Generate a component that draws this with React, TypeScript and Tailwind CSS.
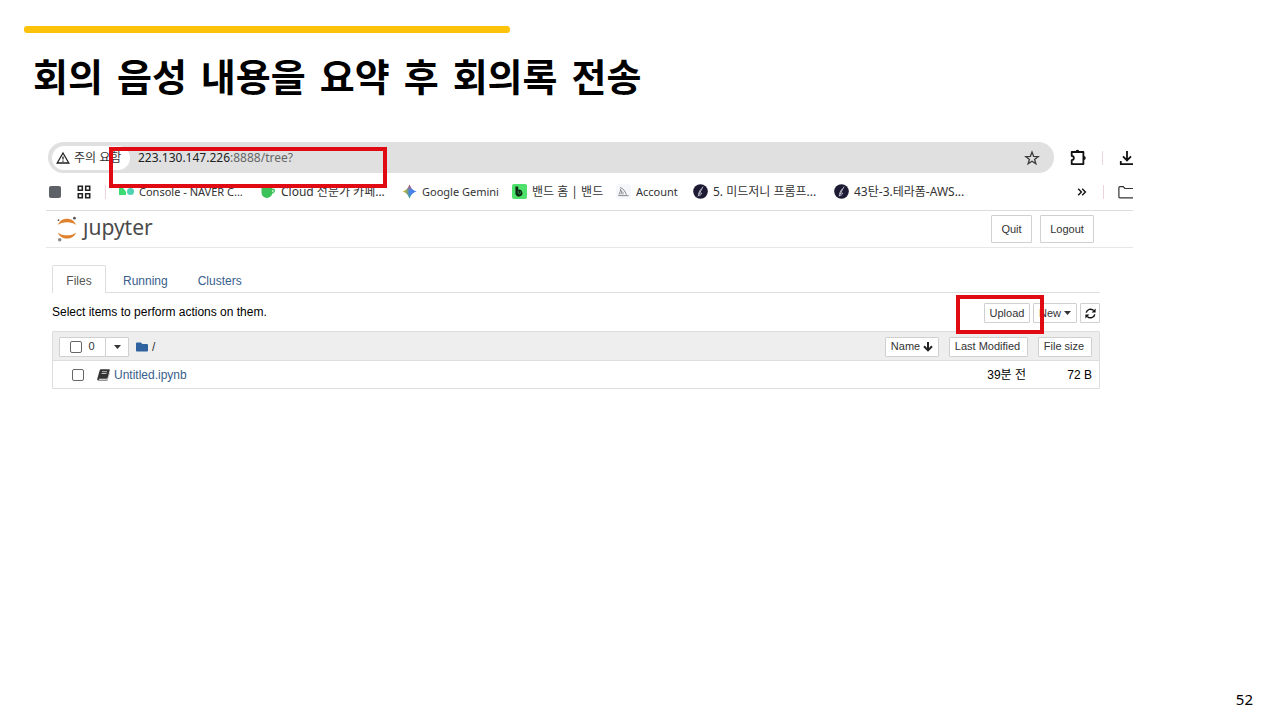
import type { ReactNode } from 'react';
import { FaFolder } from 'react-icons/fa';

const chromeFont = "font-['Noto_Sans','Noto_Sans_CJK_KR',sans-serif]";
const notebookFont = "font-['Liberation_Sans','Noto_Sans_CJK_KR',sans-serif]";

function WarningIcon() {
  return (
    <svg className="size-[14px]" viewBox="0 0 14 14" fill="none" stroke="#222" strokeWidth="1.3">
      <path d="M7 2 12.8 12H1.2Z" strokeLinejoin="miter" />
      <path d="M7 5.4v3.2M7 9.5v1.3" />
    </svg>
  );
}

function StarIcon() {
  return (
    <svg className="size-4" viewBox="0 0 16 16" fill="none" stroke="#3c3c3c" strokeWidth="1.3">
      <path d="M8 2 9.6 6.300l4.600.2-3.600 2.900 1.300 4.400L8 11.300l-3.900 2.500 1.300-4.400-3.600-2.900 4.600-.2Z" />
    </svg>
  );
}

function PuzzleIcon() {
  return (
    <svg className="size-[17px]" viewBox="0 0 16 16">
      <path
        d="M1.6 2.8H12.6V14.2H1.6v-3.700a2 2 0 0 0 0-4Z"
        fill="none"
        stroke="#111"
        strokeWidth="1.7"
        strokeLinejoin="round"
      />
      <path d="M5.2 2.6a1.8 1.8 0 0 1 3.6 0ZM13 6.700a1.800 1.800 0 0 1 0 3.600Z" fill="#111" />
    </svg>
  );
}

function DownloadIcon() {
  return (
    <svg className="h-4 w-[14px]" viewBox="0 0 14 16" fill="none" stroke="#111" strokeWidth="1.8">
      <path d="M8 1v9M4 6.4l4 4 4-4M1.8 11v3.2H14" />
    </svg>
  );
}

function AppsIcon() {
  return (
    <svg className="size-[14px]" viewBox="0 0 14 14" fill="none" stroke="#222" strokeWidth="1.6">
      <path d="M1.3 1.3h4v4h-4ZM8.7 1.3h4v4h-4ZM1.3 8.7h4v4h-4ZM8.7 8.7h4v4h-4Z" />
    </svg>
  );
}

function ConsoleIcon() {
  return (
    <svg className="size-[15px]" viewBox="0 0 15 15">
      <path d="M0 4h4l3 3.5V11H0Z" fill="#3ddb74" />
      <circle cx="11.5" cy="7.5" r="3.5" fill="#4fd2b4" />
    </svg>
  );
}

function CafeIcon() {
  return (
    <svg className="size-[15px]" viewBox="0 0 15 15">
      <path d="M.5 4h10.8v4.500a5.400 5.400 0 0 1-10.800 0Z" fill="#3cc25a" />
      <path d="M11 5.5h1.8c1 0 1 3.4-2.6 3.9" fill="none" stroke="#3cc25a" strokeWidth="1.3" />
    </svg>
  );
}

function GeminiIcon() {
  return (
    <svg className="size-[15px]" viewBox="0 0 15 15">
      <defs>
        <linearGradient id="gemX" x1="0" y1="0.5" x2="1" y2="0.5">
          <stop offset="0" stopColor="#f2bd2c" />
          <stop offset="0.3" stopColor="#8aa95c" />
          <stop offset="0.5" stopColor="#4a86e8" />
          <stop offset="1" stopColor="#3f7df0" />
        </linearGradient>
        <linearGradient id="gemY" x1="0.5" y1="0" x2="0.5" y2="1">
          <stop offset="0" stopColor="#e8453c" />
          <stop offset="0.4" stopColor="#e8453c" stopOpacity="0" />
          <stop offset="0.65" stopColor="#2fa866" stopOpacity="0" />
          <stop offset="1" stopColor="#2fa866" />
        </linearGradient>
      </defs>
      <path d="M7.500.5Q9.200 5.800 14.500 7.500 9.200 9.200 7.500 14.500 5.800 9.200.5 7.500 5.800 5.800 7.500.5Z" fill="url(#gemX)" />
      <path d="M7.500.5Q9.200 5.800 14.500 7.500 9.200 9.200 7.500 14.500 5.800 9.200.5 7.500 5.800 5.800 7.500.5Z" fill="url(#gemY)" />
    </svg>
  );
}

function BandIcon() {
  return (
    <svg className="size-[15px]" viewBox="0 0 15 15">
      <rect width="15" height="15" rx="2" fill="#4ee26c" />
      <path d="M3.400 2.500h2.800v3.200a3.500 3.500 0 1 1-2.300 5.200c-.5-.8-.5-1.600-.5-2.400Z" fill="#0b2a14" />
      <path d="M6.2 7.2c-.4 1.600.2 2.600 1.300 2.600s1.400-1 1-2.200" fill="none" stroke="#2f9a4b" strokeWidth="1" />
    </svg>
  );
}

function SailIcon() {
  return (
    <svg className="size-[15px]" viewBox="0 0 15 15" fill="none" stroke="#888" strokeWidth="1">
      <rect width="15" height="15" rx="3" fill="#f6f7fa" stroke="none" />
      <path d="M4 3.5c3 .8 5.3 3.500 6.300 7.200M3 10.400c1-2 1.600-3.400 1.700-5.400M4.800 10.400c.7-1.600 1-2.500.9-4M7 10.400c0-1 0-1.600-.2-2.600M2.300 11.600h10.200" />
    </svg>
  );
}

function QuillIcon() {
  return (
    <svg className="size-[15px]" viewBox="0 0 15 15">
      <circle cx="7.5" cy="7.500" r="7.300" fill="#1d1b33" />
      <path d="M10 2.600 5 12.300M8.600 4.600C7.200 5.800 6 8 5.400 10.400M6.400 9.800c1-.9 2.400-1.300 2.200-.2-.2.900-1.400 1.800-3.200 2" fill="none" stroke="#d8d8e4" strokeWidth=".8" />
    </svg>
  );
}

function MoreIcon() {
  return (
    <svg className="size-[10px]" viewBox="0 0 10 10" fill="none" stroke="#111" strokeWidth="1.400">
      <path d="M1.200 1.800 4.400 5 1.200 8.200M5.200 1.800 8.400 5 5.200 8.200" />
    </svg>
  );
}

function FolderOutlineIcon() {
  return (
    <svg className="h-[14px] w-[15px]" viewBox="0 0 15 14" fill="none" stroke="#333" strokeWidth="1.200">
      <path d="M15 12.900H1.800a.9.900 0 0 1-.9-.9V2.500c0-.5.400-.9.900-.9h3.400l1.600 1.900H15" />
    </svg>
  );
}

function JupyterLogo() {
  return (
    <svg className="h-[26px] w-5" viewBox="0 0 20 26">
      <path d="M1 9C3.500.8 16.500.8 19 9 15 5.200 5 5.200 1 9Z" fill="#e0812f" />
      <path d="M1 16.400C3.500 24.600 16.500 24.600 19 16.400 15 20.200 5 20.200 1 16.400Z" fill="#e0812f" />
      <circle cx="17.400" cy="2.200" r="1.400" fill="#555" />
      <circle cx="1.500" cy="4.200" r=".9" fill="#555" />
      <circle cx="2.700" cy="23.800" r="1.800" fill="#8a8a8a" />
    </svg>
  );
}

function CaretIcon() {
  return (
    <svg className="h-1 w-[7px]" viewBox="0 0 7 4" fill="currentColor">
      <path d="M0 0h7L3.500 4Z" />
    </svg>
  );
}

function ArrowDownIcon() {
  return (
    <svg className="size-[10px]" viewBox="0 0 10 10" fill="none" stroke="#222" strokeWidth="2">
      <path d="M5 0v8.300M1 4.300 5 8.400l4-4.100" />
    </svg>
  );
}

function RefreshIcon() {
  return (
    <svg className="size-[11px]" viewBox="0 0 11 11" fill="none" stroke="#111" strokeWidth="1.500">
      <path d="M1.200 4.700A4.400 4.400 0 0 1 8.700 2.600M9.800 6.300A4.400 4.400 0 0 1 2.300 8.400" />
      <path d="M10.600.6v4H6.600ZM.4 10.400v-4h4Z" fill="#111" stroke="none" />
    </svg>
  );
}

function BookIcon() {
  return (
    <svg className="h-3 w-[13px]" viewBox="0 0 13 12">
      <path d="M4 .3h8.200c.5 0 .7.400.6.800L10.500 9.200c-.1.400-.5.600-.9.600H2.300c-.7 0-.7.900 0 .9h8.300l2-7.300v1l-1.900 6.600c-.1.400-.5.600-.9.600H1.700C.6 11.600 0 10.700.3 9.700L2.700 1.200C2.900.6 3.400.3 4 .3Z" fill="#333" />
      <path d="M5 2.700h5M4.500 4.500h5" stroke="#ddd" strokeWidth=".8" />
    </svg>
  );
}

const bookmarks: { label: string; icon: ReactNode; size: string }[] = [
  { label: 'Console - NAVER C...', icon: <ConsoleIcon />, size: 'w-[142px] text-[11px]' },
  { label: 'Cloud 전문가 카페...', icon: <CafeIcon />, size: 'w-[141px] text-[12px]' },
  { label: 'Google Gemini', icon: <GeminiIcon />, size: 'w-[110px] text-[11px]' },
  { label: '밴드 홈 | 밴드', icon: <BandIcon />, size: 'w-[104px] text-[12px]' },
  { label: 'Account', icon: <SailIcon />, size: 'w-[77px] text-[11px]' },
  { label: '5. 미드저니 프롬프...', icon: <QuillIcon />, size: 'w-[141px] text-[12px]' },
  { label: '43탄-3.테라폼-AWS...', icon: <QuillIcon />, size: 'w-[141px] text-[12px]' },
];

function AddressBar() {
  return (
    <div className="flex h-[31px] items-center pl-[2px]">
      <div className="flex h-full flex-1 items-center rounded-full bg-[#e0e0e0] pr-[14px] pl-1">
        <button className="flex h-6 w-[78px] shrink-0 items-center gap-1 rounded-full bg-white pl-1 text-[12px] whitespace-nowrap text-[#333]">
          <WarningIcon />
          주의 요함
        </button>
        <div className="relative ml-2 flex flex-1 items-center text-[12px] leading-4">
          <span aria-hidden="true" className="pointer-events-none absolute inset-0 text-[#666]">
            <span className="text-[#222]">223.130.147.226</span>:8888/tree?
          </span>
          <input aria-label="URL" defaultValue="223.130.147.226:8888/tree?" className="w-full bg-transparent text-transparent outline-none" />
        </div>
        <button aria-label="Bookmark"><StarIcon /></button>
      </div>
      <div className="flex items-center pl-4">
        <button aria-label="Extensions"><PuzzleIcon /></button>
        <span className="mr-4 ml-[15px] h-[14px] w-px bg-[#ecd5dc]" />
        <button aria-label="Downloads"><DownloadIcon /></button>
      </div>
    </div>
  );
}

function BookmarksBar() {
  return (
    <nav className="flex h-[38px] items-center border-b border-[#dcdcdc] pl-[3px] text-[#333]">
      <span className="size-3 rounded-[2px] bg-[#5f6168]" />
      <button aria-label="Apps" className="ml-4"><AppsIcon /></button>
      <span className="mr-[13px] ml-[14px] h-[14px] w-px bg-[#ecd5dc]" />
      {bookmarks.map((b) => (
        <a key={b.label} href="#" className={`flex shrink-0 items-center gap-[5px] leading-4 whitespace-nowrap ${b.size}`}>
          {b.icon}
          {b.label}
        </a>
      ))}
      <div className="ml-auto flex items-center">
        <button aria-label="More bookmarks"><MoreIcon /></button>
        <span className="mr-[14px] ml-4 h-[14px] w-px bg-[#ecd5dc]" />
        <button aria-label="All bookmarks"><FolderOutlineIcon /></button>
      </div>
    </nav>
  );
}

const smallButton = 'flex h-5 items-center justify-center rounded-[1px] border border-[#d0d0d0] bg-white text-[11px] whitespace-nowrap text-[#333]';
const headerButton = 'h-7 rounded-[1px] border border-[#d0d0d0] bg-white text-[11px] text-[#333]';
const checkbox = 'size-3 appearance-none rounded-[2px] border border-[#666] bg-white checked:bg-[#337ab7]';

function NotebookHeader() {
  return (
    <header className="flex h-[37px] items-center border-b border-[#e7e7e7] pr-[39px] pl-[11px]">
      <a href="#" className="flex items-center gap-[6px]" aria-label="jupyter">
        <JupyterLogo />
        <span className="pb-1 font-['Noto_Sans',sans-serif] text-[21px] leading-6 text-[#4a4a4a]">ȷupyter</span>
      </a>
      <div className="ml-auto flex gap-2">
        <button className={`${headerButton} w-[41px]`}>Quit</button>
        <button className={`${headerButton} w-[54px]`}>Logout</button>
      </div>
    </header>
  );
}

function FileBrowser() {
  return (
    <main className="pt-[17px] pr-[33px] pl-[6px] text-[12px]">
      <div role="tablist" className="flex h-7 border-b border-[#ddd] text-[#37608c]">
        <button role="tab" aria-selected="true" className="-mb-px w-[54px] rounded-t-[2px] border border-b-0 border-[#ddd] bg-white pt-[2px] text-[#555]">Files</button>
        <button role="tab" aria-selected="false" className="ml-[17px] pt-1">Running</button>
        <button role="tab" aria-selected="false" className="ml-[30px] pt-1">Clusters</button>
      </div>
      <div className="flex h-[38px] items-center">
        <p className="text-black">Select items to perform actions on them.</p>
        <div className="ml-auto flex gap-[3px] pt-[2px]">
          <button className={`${smallButton} w-[46px]`}>Upload</button>
          <button className={`${smallButton} w-11 gap-[3px]`}>New <CaretIcon /></button>
          <button aria-label="Refresh" className={`${smallButton} w-5`}><RefreshIcon /></button>
        </div>
      </div>
      <table className="w-full border-separate border-spacing-0 rounded-[1px] border border-[#ddd]">
        <thead>
          <tr className="h-[29px] bg-[#eeeeee]">
            <th className="border-b border-[#ddd] pt-px pl-[6px] font-normal">
              <div className="flex items-center">
                <label className={`${smallButton} w-[47px] gap-[6px]`}>
                  <input type="checkbox" className={checkbox} />0
                </label>
                <button aria-label="Select by type" className={`${smallButton} -ml-px w-6`}><CaretIcon /></button>
                <a href="#" className="ml-[7px] flex items-center gap-1 text-[#333]">
                  <FaFolder className="size-3 text-[#2f629f]" />/
                </a>
              </div>
            </th>
            <th className="w-[79px] border-b border-[#ddd] pt-px pr-[10px] font-normal">
              <button className={`${smallButton} ml-auto w-[54px] gap-[3px]`}>Name <ArrowDownIcon /></button>
            </th>
            <th className="w-[79px] border-b border-[#ddd] pt-px font-normal">
              <button className={`${smallButton} w-full pr-[2px]`}>Last Modified</button>
            </th>
            <th className="w-[71px] border-b border-[#ddd] pt-px pr-[7px] font-normal">
              <button className={`${smallButton} ml-auto w-[54px] pr-[2px]`}>File size</button>
            </th>
          </tr>
        </thead>
        <tbody>
          <tr className="h-[27px] text-black">
            <td colSpan={2} className="pl-[19px]">
              <div className="flex items-center">
                <input id="file-0" type="checkbox" aria-label="Untitled.ipynb" className={checkbox} />
                <span className="ml-[13px]"><BookIcon /></span>
                <a href="#" className="ml-1 text-[#37608c]">Untitled.ipynb</a>
              </div>
            </td>
            <td className="pr-[2px] text-right">39분 전</td>
            <td className="pr-[7px] text-right">72 B</td>
          </tr>
        </tbody>
      </table>
    </main>
  );
}

export default function App() {
  return (
    <div className={`flex min-h-screen flex-col bg-white ${chromeFont}`}>
      <div className="mt-[26px] ml-6 h-[7px] w-[38%] rounded-[3px] bg-[#fdc20a]" />
      <h1 className="mt-[18px] ml-[33px] flex flex-wrap gap-x-[14px] font-['Noto_Sans_CJK_KR',sans-serif] text-[38px] leading-[48px] font-bold text-black">
        {['회의', '음성', '내용을', '요약', '후', '회의록', '전송'].map((word) => (
          <span key={word}>{word}</span>
        ))}
      </h1>
      <section className="relative mt-[43px] mr-[147px] ml-[46px]">
        <AddressBar />
        <BookmarksBar />
        <div className={notebookFont}>
          <NotebookHeader />
          <FileBrowser />
        </div>
        <div className="pointer-events-none absolute top-[5px] left-[63px] h-[41px] w-[278px] border-4 border-[#e00b12]" />
        <div className="pointer-events-none absolute top-[153px] right-[89px] h-[39px] w-[88px] border-4 border-[#e00b12]" />
      </section>
      <footer className="mt-auto pr-[27px] pb-[11px] text-right text-[15px] leading-5 text-black">52</footer>
    </div>
  );
}
